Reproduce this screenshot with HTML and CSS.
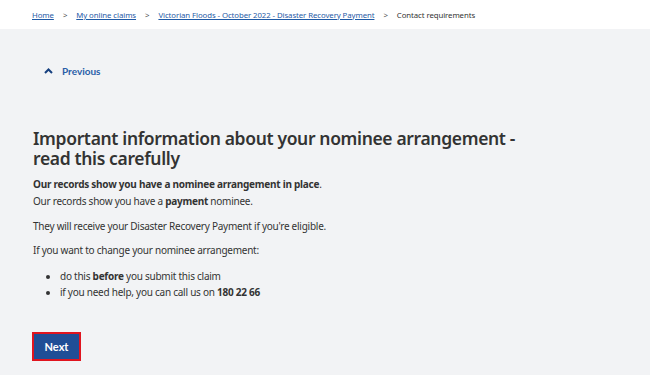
FILE: index.html
```html
<!DOCTYPE html>
<html lang="en">
<head>
    <meta charset="UTF-8">
    <meta name="viewport" content="width=device-width, initial-scale=1.0">
    <title>Contact requirements</title>
    <link rel="stylesheet" href="styles.css">
</head>
<body>

<!-- breadcrumb -->
<div class="crumbs">
    <a href="#">Home</a>
    <span class="sep">&gt;</span>
    <a href="#">My online claims</a>
    <span class="sep">&gt;</span>
    <a href="#">Victorian Floods - October 2022 - Disaster Recovery Payment</a>
    <span class="sep">&gt;</span>
    <span class="current">Contact requirements</span>
</div>

<!-- main content -->
<div class="page">
    <a href="#" class="prev-link">
        <svg width="9" height="6" viewBox="0 0 9 6"><path d="M1 5 L4.5 1.5 L8 5" fill="none" stroke="#17407f" stroke-width="2"/></svg>
        Previous
    </a>

    <h1>Important information about your nominee arrangement - read this carefully</h1>

    <p class="lead"><b>Our records show you have a nominee arrangement in place</b>.</p>
    <p>Our records show you have a <b>payment</b> nominee.</p>

    <p>They will receive your Disaster Recovery Payment if you're eligible.</p>

    <p>If you want to change your nominee arrangement:</p>
    <ul>
        <li>do this <b>before</b> you submit this claim</li>
        <li>if you need help, you can call us on <b>180 22 66</b></li>
    </ul>

    <div class="actions">
        <button class="next-btn">Next</button>
    </div>
</div>

</body>
</html>
```

FILE: styles.css
```css
body {
    font-family: "Noto Sans", "Open Sans", sans-serif;
    background-color: #fff;
    color: #333;
    margin: 0;
    padding: 0;
    font-size: 10px;
    letter-spacing: -0.25px;
}

.crumbs {
    height: 29px;
    display: flex;
    align-items: center;
    gap: 9px;
    padding-left: 32px;
    font-size: 7.8px;
    letter-spacing: -0.08px;
    color: #333;
}

.crumbs a {
    color: #1f5aa6;
}

.crumbs .sep {
    color: #555;
}

.page {
    background-color: #f2f3f5;
    padding: 36px 33px 16px;
    height: 294px;
}

.prev-link {
    display: flex;
    align-items: center;
    gap: 9px;
    margin-left: 11px;
    font-family: Lato, sans-serif;
    font-weight: bold;
    font-size: 10px;
    letter-spacing: 0;
    color: #2a5ea8;
    text-decoration: none;
}

h1 {
    margin: 51px 0 9px;
    font-size: 17.5px;
    line-height: 20px;
    font-weight: 600;
    letter-spacing: -0.35px;
    color: #333;
    max-width: 500px;
}

p {
    margin: 0 0 9.5px;
    line-height: 15px;
}

.lead {
    margin-bottom: 2px;
}

ul {
    margin: 0;
    padding-left: 27px;
}

li {
    line-height: 16.5px;
}

.actions {
    margin-top: 33px;
}

.next-btn {
    font-family: Lato, sans-serif;
    font-weight: bold;
    font-size: 11px;
    color: #fff;
    background-color: #1f4e96;
    border: none;
    width: 45px;
    height: 25px;
    margin-left: 1px;
    outline: 2px solid #e0141e;
    cursor: pointer;
}
```
